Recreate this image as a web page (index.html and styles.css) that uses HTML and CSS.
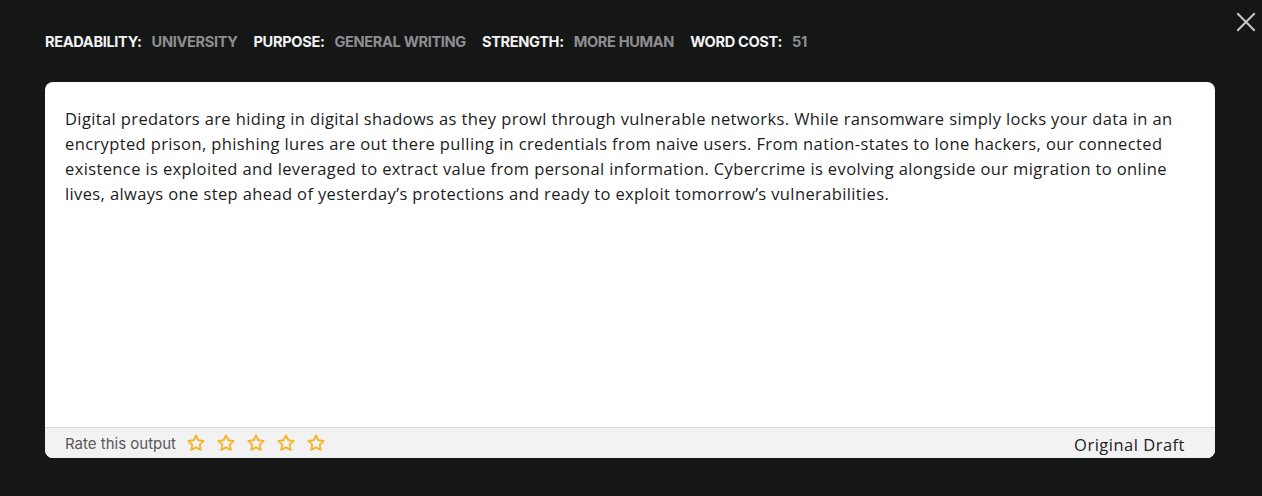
FILE: index.html
```html
<!DOCTYPE html>
<html>
<head>
<meta charset="utf-8">
<link rel="stylesheet" href="styles.css">
</head>
<body>
<div class="page">
  <button class="close" aria-label="Close">
    <svg width="20" height="20" viewBox="0 0 20 20"><path d="M2 2 L18 18 M18 2 L2 18" stroke="#c8c8c8" stroke-width="2" stroke-linecap="square"/></svg>
  </button>
  <div class="meta">
    <span class="label">READABILITY:</span><span class="value">UNIVERSITY</span>
    <span class="label">PURPOSE:</span><span class="value">GENERAL WRITING</span>
    <span class="label">STRENGTH:</span><span class="value">MORE HUMAN</span>
    <span class="label">WORD COST:</span><span class="value">51</span>
  </div>
  <div class="card">
    <div class="content">
      <p>Digital predators are hiding in digital shadows as they prowl through vulnerable networks. While ransomware simply locks your data in an encrypted prison, phishing lures are out there pulling in credentials from naive users. From nation-states to lone hackers, our connected existence is exploited and leveraged to extract value from personal information. Cybercrime is evolving alongside our migration to online lives, always one step ahead of yesterday’s protections and ready to exploit tomorrow’s vulnerabilities.</p>
    </div>
    <div class="footer">
      <div class="rate">
        <span class="rate-text">Rate this output</span>
        <span class="stars">
          <svg class="star" viewBox="0 0 24 24"><path d="M12 2.8l2.8 5.9 6.4.8-4.7 4.4 1.2 6.4L12 17.2l-5.7 3.1 1.2-6.4-4.7-4.4 6.4-.8z"/></svg>
          <svg class="star" viewBox="0 0 24 24"><path d="M12 2.8l2.8 5.9 6.4.8-4.7 4.4 1.2 6.4L12 17.2l-5.7 3.1 1.2-6.4-4.7-4.4 6.4-.8z"/></svg>
          <svg class="star" viewBox="0 0 24 24"><path d="M12 2.8l2.8 5.9 6.4.8-4.7 4.4 1.2 6.4L12 17.2l-5.7 3.1 1.2-6.4-4.7-4.4 6.4-.8z"/></svg>
          <svg class="star" viewBox="0 0 24 24"><path d="M12 2.8l2.8 5.9 6.4.8-4.7 4.4 1.2 6.4L12 17.2l-5.7 3.1 1.2-6.4-4.7-4.4 6.4-.8z"/></svg>
          <svg class="star" viewBox="0 0 24 24"><path d="M12 2.8l2.8 5.9 6.4.8-4.7 4.4 1.2 6.4L12 17.2l-5.7 3.1 1.2-6.4-4.7-4.4 6.4-.8z"/></svg>
        </span>
      </div>
      <span class="draft">Original Draft</span>
    </div>
  </div>
</div>
</body>
</html>
```

FILE: styles.css
```css
html, body {
  margin: 0;
  padding: 0;
  background: #151717;
  height: 100%;
}
.page {
  position: relative;
  padding: 32px 47px 0 45px;
  box-sizing: border-box;
  height: 496px;
}
.close {
  position: absolute;
  top: 12px;
  right: 6px;
  background: none;
  border: 0;
  padding: 0;
  width: 20px;
  height: 20px;
  cursor: pointer;
}
.meta {
  font-family: Inter, "Liberation Sans", sans-serif;
  font-weight: 700;
  font-size: 14.6px;
  letter-spacing: -0.35px;
  line-height: 20px;
  display: flex;
  align-items: center;
}
.label {
  color: #f2f2f2;
  margin-right: 10px;
}
.value {
  color: #8e8e92;
  margin-right: 16px;
}
.card {
  margin-top: 30px;
  background: #fff;
  border-radius: 8px;
  height: 376px;
  display: flex;
  flex-direction: column;
  overflow: hidden;
}
.content {
  flex: 1;
  padding: 24px 20px 0 20px;
}
.content p {
  margin: 0;
  font-family: "Open Sans", "Noto Sans", sans-serif;
  font-size: 16.5px;
  letter-spacing: 0.38px;
  line-height: 25px;
  color: #1c1c1c;
}
.footer {
  height: 30px;
  border-top: 1px solid #d6d6d6;
  background: #f2f2f2;
  display: flex;
  align-items: center;
  justify-content: space-between;
  padding: 0 30px 0 20px;
}
.rate {
  display: flex;
  align-items: center;
}
.rate-text {
  font-family: Inter, "Liberation Sans", sans-serif;
  font-size: 15px;
  color: #595959;
  margin-right: 10px;
}
.stars {
  display: flex;
  gap: 10px;
}
.star {
  width: 20px;
  height: 20px;
  fill: none;
  stroke: #f6b52c;
  stroke-width: 2.3;
  stroke-linejoin: round;
}
.draft {
  font-family: "Open Sans", "Noto Sans", sans-serif;
  font-size: 16.5px;
  letter-spacing: 0.5px;
  color: #222;
  margin-top: 2px;
}
```
